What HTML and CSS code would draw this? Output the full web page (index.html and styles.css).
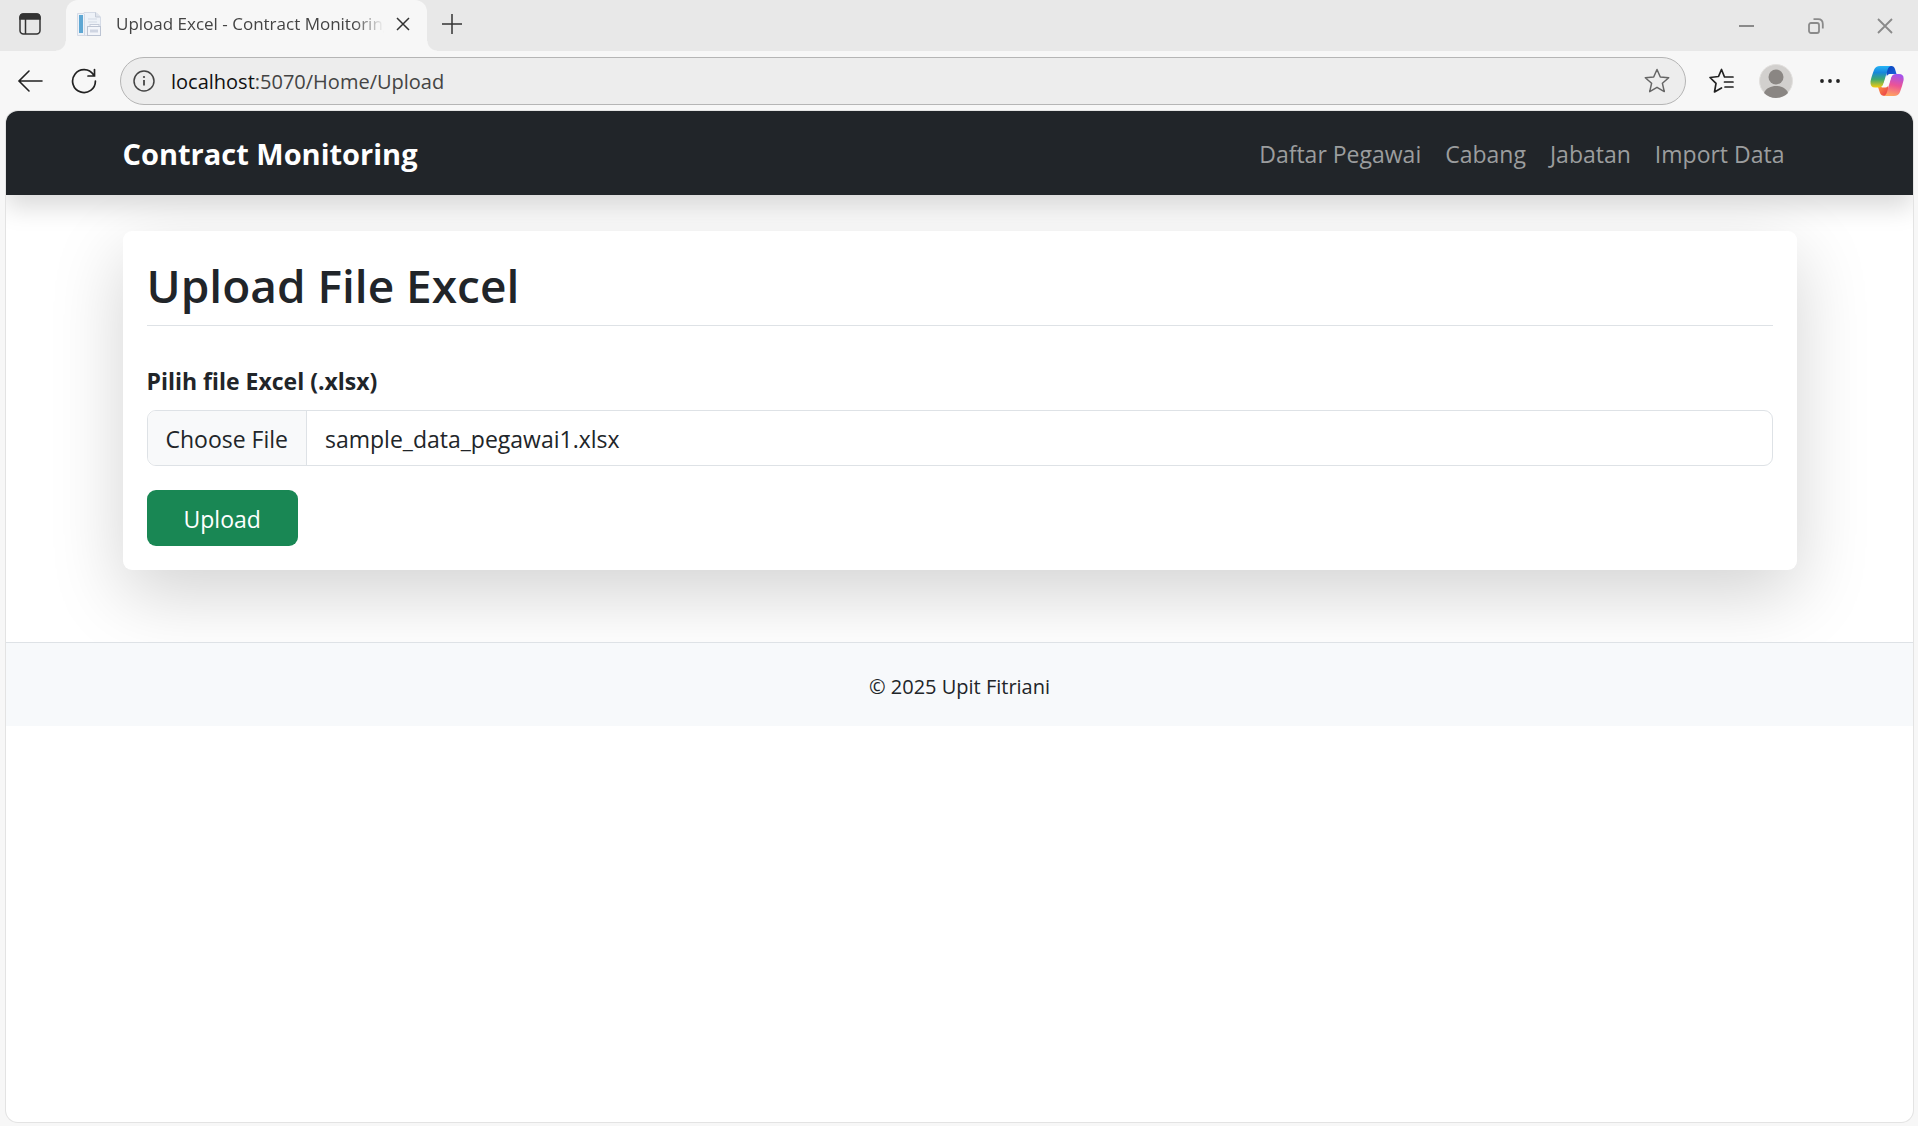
FILE: index.html
```html
<!DOCTYPE html>
<html lang="id">
<head>
<meta charset="utf-8">
<meta name="viewport" content="width=device-width, initial-scale=1">
<title>Upload Excel - Contract Monitoring</title>
<link rel="stylesheet" href="styles.css">
</head>
<body>
<div class="tabstrip">
  <button class="tab-actions" type="button" aria-label="Tab actions">
    <svg width="22" height="22" viewBox="0 0 22 22" fill="none" stroke="#333" stroke-width="1.5"><rect x="1" y="1" width="20" height="20" rx="3.5"/><path d="M1 6V4.500Q1 1 4.500 1H17.500Q21 1 21 4.500V6Z" fill="#333"/><path d="M6.500 6V21"/></svg>
  </button>
  <div class="tab">
    <svg class="favicon" width="26" height="26" viewBox="0 0 26 26"><path d="M1.500 2.500H8V1.500H20L24.500 6V24.500H1.500Z" fill="#eef2f8" stroke="#d5dbe6"/><path d="M19.500 1.500V6H24" fill="#dfe4ec" stroke="#c5ccd8"/><path d="M8.500 3V24M12 8H21M12 11H21" stroke="#d3dae5" fill="none"/><rect x="3" y="4" width="4" height="18" fill="#5ea7d3"/><rect x="14" y="13.500" width="9" height="6" fill="#f6f7fb" stroke="#c5ccda"/><rect x="11.500" y="15.500" width="13" height="9" fill="#f3f5fa" stroke="#bcc4d3"/><path d="M14 20H22" stroke="#cfd5e2" stroke-width="3"/></svg>
    <span class="tab-title">Upload Excel - Contract Monitoring</span>
    <button class="tab-close" type="button" aria-label="Close tab">
      <svg width="14" height="14" viewBox="0 0 14 14" stroke="#333" stroke-width="1.500" fill="none"><path d="M1 1L13 13M13 1L1 13"/></svg>
    </button>
  </div>
  <button class="new-tab" type="button" aria-label="New tab">
    <svg width="22" height="22" viewBox="0 0 22 22" stroke="#333" stroke-width="1.500" fill="none"><path d="M11 1V21M1 11H21"/></svg>
  </button>
  <div class="window-controls">
    <button type="button" aria-label="Minimize"><svg width="16" height="16" viewBox="0 0 16 16" stroke="#8a8a8a" stroke-width="2"><path d="M0 8H15"/></svg></button>
    <button type="button" aria-label="Restore"><svg width="16" height="16" viewBox="0 0 16 16" stroke="#8a8a8a" stroke-width="1.800" fill="none"><rect x="1" y="5" width="10" height="10" rx="2"/><path d="M5.500 1.200H10Q14.800 1.200 14.800 6V10.500"/></svg></button>
    <button type="button" aria-label="Close"><svg width="16" height="16" viewBox="0 0 16 16" stroke="#8a8a8a" stroke-width="1.800" fill="none"><path d="M1 1L15 15M15 1L1 15"/></svg></button>
  </div>
</div>

<div class="toolbar">
  <button class="back" type="button" aria-label="Back"><svg width="26" height="26" viewBox="0 0 26 26" stroke="#222" stroke-width="1.600" fill="none" stroke-linecap="round"><path d="M25 13H2M12 3L2 13L12 23"/></svg></button>
  <button class="reload" type="button" aria-label="Refresh"><svg width="26" height="26" viewBox="0 0 26 26" stroke="#222" stroke-width="1.700" fill="none" stroke-linecap="round"><path d="M24.400 13A11.400 11.400 0 1 1 22.500 6.800M23.500 1.500V8H17"/></svg></button>
  <div class="address">
    <svg width="22" height="22" viewBox="0 0 22 22" fill="none" stroke="#444" stroke-width="1.500"><circle cx="11" cy="11" r="10"/><path d="M11 10V15.500" stroke-width="1.800"/><circle cx="11" cy="7" r="1.100" fill="#444" stroke="none"/></svg>
    <a class="url" href="#"><span class="host">localhost</span>:5070/Home/Upload</a>
    <button class="star" type="button" aria-label="Add to favorites"><svg width="26" height="26" viewBox="0 0 26 26" fill="none" stroke="#666" stroke-width="1.500" stroke-linejoin="round"><path d="M13 1.500L16.300 9L24.700 9.800L18.400 15.300L20.300 23.600L13 19.300L5.700 23.600L7.600 15.300L1.300 9.800L9.700 9Z"/></svg></button>
  </div>
  <div class="tools">
    <button type="button" aria-label="Favorites"><svg width="26" height="26" viewBox="0 0 26 26" fill="none" stroke="#222" stroke-width="1.700" stroke-linejoin="round" stroke-linecap="round"><path d="M25 9H16.500L13.500 1.500L10.500 8.500L2 9.500L8 15.300L6.500 24L13.500 20M16.500 14H25M17 19H25"/></svg></button>
    <button class="profile" type="button" aria-label="Profile"><svg width="34" height="34" viewBox="0 0 34 34"><circle cx="17" cy="17" r="16.500" fill="#d2d0ce" stroke="#e2e0de"/><circle cx="17" cy="13" r="7.500" fill="#8a8683"/><path d="M5 29C7 24 12 22 17 22S27 24 29 29Q24 34 17 34T5 29Z" fill="#8a8683"/></svg></button>
    <button class="more" type="button" aria-label="Settings and more"><svg width="20" height="6" viewBox="0 0 20 6" fill="#222"><circle cx="2" cy="3" r="1.900"/><circle cx="10" cy="3" r="1.900"/><circle cx="18" cy="3" r="1.900"/></svg></button>
    <button class="copilot" type="button" aria-label="Copilot"><svg width="34" height="32" viewBox="0 0 34 32">
      <defs>
        <linearGradient id="c1" x1="0" y1="0" x2="0" y2="1"><stop offset="0" stop-color="#27b5f6"/><stop offset=".3" stop-color="#1787dc"/><stop offset=".62" stop-color="#3fa86f"/><stop offset="1" stop-color="#f8cc0c"/></linearGradient>
        <linearGradient id="c2" x1=".6" y1="0" x2=".4" y2="1"><stop offset="0" stop-color="#a253ee"/><stop offset=".5" stop-color="#ec5396"/><stop offset="1" stop-color="#ffa460"/></linearGradient>
        <linearGradient id="c3" x1="0" y1="0" x2="1" y2="1"><stop offset="0" stop-color="#0a3fb8"/><stop offset="1" stop-color="#1a66e0"/></linearGradient>
        <linearGradient id="c4" x1="0" y1="0" x2="1" y2="1"><stop offset="0" stop-color="#ffa040"/><stop offset="1" stop-color="#e8304c"/></linearGradient>
      </defs>
      <path d="M15 1H21.500Q24 1 25 4L26.500 9H21Q18 9 17 12Z" fill="url(#c3)"/>
      <path d="M19 31H15Q11 31 10 28L8 22H14Q17 22 18 19Z" fill="url(#c4)"/>
      <path d="M10 1H21Q18.500 1.500 17.500 5L13.500 18.500Q12.300 22.500 8.500 22.500H5Q0 22.500 .5 16.500Q1 13 4 5Q5.500 1 10 1Z" fill="url(#c1)"/>
      <path d="M24 31H13.500Q16 30.500 17 27L21 13Q22.200 9 26 9H29Q34.500 9 33.500 15.500Q32.500 20 30 27Q28.500 31 24 31Z" fill="url(#c2)"/>
      <path d="M20.500 9H23Q21.500 10 21 12.500L18.500 20Q17.600 22.500 15.500 22.500H11.500Q13 21.500 13.700 18.500L16.500 12Q17.500 9 20.500 9Z" fill="#fafafa"/>
    </svg></button>
  </div>
</div>

<div class="page">
  <header class="navbar">
    <div class="container nav-inner">
      <a class="brand" href="#">Contract Monitoring</a>
      <nav class="nav-links">
        <a href="#">Daftar Pegawai</a>
        <a href="#">Cabang</a>
        <a href="#">Jabatan</a>
        <a href="#">Import Data</a>
      </nav>
    </div>
  </header>
  <main class="container">
    <section class="card">
      <h2>Upload File Excel</h2>
      <form class="upload-form">
        <label for="excel">Pilih file Excel (.xlsx)</label>
        <input class="file" id="excel" type="file" accept=".xlsx">
        <button class="submit" type="button">Upload</button>
      </form>
    </section>
  </main>
  <footer class="footer">© 2025 Upit Fitriani</footer>
</div>
<script src="script.js"></script>
</body>
</html>
```
FILE: styles.css
```css
*, *::before, *::after { box-sizing: border-box; }

body {
  margin: 0;
  min-height: 100vh;
  display: flex;
  flex-direction: column;
  background: #f7f7f7;
  color: #212529;
  font-family: "Open Sans", "Noto Sans", sans-serif;
  font-size: 23px;
  line-height: 36px;
}

a { color: inherit; text-decoration: none; }
button { font: inherit; border: 0; padding: 0; background: none; color: inherit; }
svg { display: block; flex: none; }

/* Browser tab strip */
.tabstrip {
  display: flex;
  height: 51px;
  background: #e8e8e8;
}
.tab-actions {
  width: 66px;
  padding: 0 4px 4px 19px;
}
.tab {
  position: relative;
  display: flex;
  align-items: center;
  width: 361px;
  padding: 0 17px 3px 10px;
  border-radius: 12px 12px 0 0;
  background: #f7f7f7;
}
.tab::before, .tab::after {
  content: "";
  position: absolute;
  bottom: 0;
  width: 10px;
  height: 10px;
}
.tab::before { right: 100%; background: radial-gradient(circle at 0 0, #e8e8e8 9px, #f7f7f7 10px); }
.tab::after { left: 100%; background: radial-gradient(circle at 100% 0, #e8e8e8 9px, #f7f7f7 10px); }
.tab-title {
  flex: 1;
  min-width: 0;
  margin: 0 12px 0 14px;
  overflow: hidden;
  white-space: nowrap;
  color: #444;
  font-size: 17px;
  line-height: 24px;
  -webkit-mask-image: linear-gradient(to left, transparent, #000 30px);
  mask-image: linear-gradient(to left, transparent, #000 30px);
}
.new-tab { padding: 0 14px 4px; }
.window-controls {
  display: flex;
  margin-left: auto;
}
.window-controls button {
  display: grid;
  place-items: center;
  width: 69px;
  padding-left: 3px;
}

/* Browser toolbar */
.toolbar {
  display: flex;
  align-items: center;
  height: 60px;
  padding: 0 14px 0 17px;
}
.reload { margin: 0 23px 0 28px; }
.address {
  flex: 1;
  display: flex;
  align-items: center;
  height: 48px;
  padding: 0 15px 0 12px;
  border: 1px solid #b5b5b5;
  border-radius: 24px;
  background: #ededed;
}
.url {
  flex: 1;
  margin-left: 16px;
  padding-top: 2px;
  color: #444;
  font-size: 20px;
}
.host { color: #111; }
.tools {
  display: flex;
  align-items: center;
  margin-left: 22px;
}
.profile { margin-left: 25px; }
.more { margin-left: 27px; }
.copilot { margin-left: 30px; }

/* Web page area */
.page {
  flex: 1;
  margin: 0 5px 4px 6px;
  overflow: hidden;
  border-radius: 12px;
  background: #fff;
  box-shadow: 0 0 0 1px #e3e3e3;
}
.container {
  width: 100%;
  max-width: 1710px;
  margin: 0 auto;
  padding: 0 18px;
}
.navbar {
  position: relative;
  padding: 13px 0 11px;
  background: #212529;
  box-shadow: 0 12px 24px rgba(0, 0, 0, .15);
}
.nav-inner {
  display: flex;
  align-items: center;
  justify-content: space-between;
}
.brand {
  padding: 12px 0;
  color: #fff;
  font-size: 29px;
  font-weight: 700;
}
.nav-links {
  display: flex;
  gap: 24px;
  padding: 0 12px;
  color: #9b9d9e;
}
.card {
  margin: 36px 0 72px;
  padding: 25px 24px 24px;
  border-radius: 9px;
  background: #fff;
  box-shadow: 0 24px 72px rgba(0, 0, 0, .175);
}
.card h2 {
  margin: 0 0 37px;
  padding-bottom: 11px;
  border-bottom: 1px solid #dee2e6;
  font-size: 46px;
  font-weight: 600;
  line-height: 58px;
}
.upload-form {
  display: flex;
  flex-direction: column;
  align-items: flex-start;
}
.upload-form label {
  margin-bottom: 11px;
  font-weight: 700;
}
.file {
  width: 100%;
  height: 56px;
  margin-bottom: 24px;
  padding: 10px 18px 8px;
  overflow: hidden;
  border: 1px solid #dee2e6;
  border-radius: 9px;
  color: inherit;
  font: inherit;
}
.file::file-selector-button {
  margin: -10px 18px -8px -18px;
  padding: 10px 18px 8px;
  border: 0 solid #dee2e6;
  border-right-width: 1px;
  background: #f8f9fa;
  color: inherit;
  font: inherit;
}
.submit {
  padding: 11px 37px 9px;
  border-radius: 9px;
  background: #198754;
  color: #fff;
}
.footer {
  padding: 26px 0 21px;
  border-top: 1px solid #dee2e6;
  background: rgba(247, 249, 251, .95);
  font-size: 20px;
  text-align: center;
}
```
FILE: script.js
```js
// Preselect the sample workbook in the file field.
const transfer = new DataTransfer();
transfer.items.add(new File([''], 'sample_data_pegawai1.xlsx'));
document.getElementById('excel').files = transfer.files;
```
